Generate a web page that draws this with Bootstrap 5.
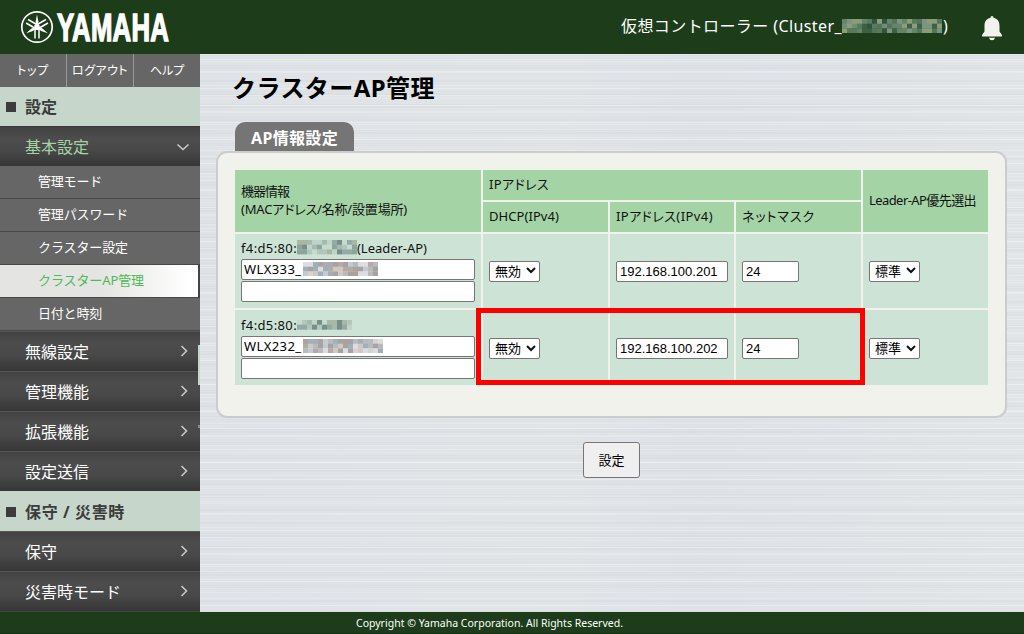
<!DOCTYPE html>
<html lang="ja">
<head>
<meta charset="utf-8">
<title>クラスターAP管理</title>
<link href="https://cdn.jsdelivr.net/npm/bootstrap@5.3.0/dist/css/bootstrap.min.css" rel="stylesheet">
<style>
body{font-family:"Noto Sans","Noto Sans CJK JP",sans-serif;font-size:13px;line-height:18px;color:#111;height:634px;overflow:hidden}
.quick,.ap{font-feature-settings:"palt"}
.topbar{height:54px;background:#1d3c1a;color:#fff}
.side{width:200px;background:#444}
.main-area{background:
 repeating-linear-gradient(180deg,rgba(255,255,255,.3) 0 1px,transparent 1px 7px,rgba(255,255,255,.2) 7px 8px,transparent 8px 17px),
 repeating-linear-gradient(180deg,rgba(190,195,200,.13) 0 2px,transparent 2px 5px,rgba(255,255,255,.2) 5px 6px,transparent 6px 11px,rgba(190,195,200,.13) 11px 12px,transparent 12px 13px),
 linear-gradient(90deg,#dfe3e7,#e1e4e7 45%,#dee1e6 60%,#e2e5e7)}
.quick{height:33px;background:#666;color:#fff;font-size:12px}
.quick a{width:67px;color:#fff}
.quick a:first-child{width:66px}
.quick a+a{border-left:1px solid #999}
.sect{height:40px;background:#c7d6cb;color:#3c3c3c;font-size:16px;font-weight:700;padding-left:6px}
.sect i{width:10px;height:10px;background:#3c3c3c;margin-right:9px}
.menu-item{height:40px;padding:0 12px 0 25px;color:#fff;font-size:16px;border-top:1px solid #565656;background:linear-gradient(#424242,#4d4d4d 30%,#484848 60%,#363636)}
.open-item{color:#a3d4a5;height:40px;border-top-color:#383838;padding-right:11px}
.sub a{height:33px;padding:0 0 2px 38px;background:#666;color:#fff;border-bottom:1px solid #484848}
.sub a.on{color:#4fb955;background:linear-gradient(90deg,#e4e4e2 50%,#fff 95%);border-right:2px solid #444}
.foot{height:22px;background:#1d3c1a;color:#fff;font-size:10.5px;border-bottom:1px solid #152b14}
h1{font-size:24px;line-height:30px;font-weight:700;color:#000}
.tab-title{width:119px;height:29px;background:#757575;color:#fff;font-size:16px;font-weight:700;border-radius:10px 10px 0 0;margin-left:19px}
.panel{width:791px;height:267px;background:#f1f2eb;border:2px solid #cbccce;border-radius:11px;padding:15px 0 0 15px}
.ap{width:757px;table-layout:fixed;border-collapse:separate;border-spacing:2px}
.ap th,.ap td{padding:0 6px;font-weight:400;vertical-align:middle}
.ap th{background:#a4d4a6;height:30px;padding-bottom:2px}
.ap td{background:#cde3d6;height:74px}
.ap td:first-child{padding-bottom:2px}
.ap tr.last-row td{height:75px;padding-top:2px}
.ap tr.last-row td:first-child{padding:0 6px}
.field,.pick{display:block;height:21px;border:1px solid #767676;border-radius:2px;background:#fff;color:#000;padding:0 3px;outline:0}
.field{width:234px;line-height:17px}
.field.named{padding-left:2px;padding-bottom:1px;letter-spacing:.4px}
.num{font:13px "Liberation Sans",sans-serif}
.pick{width:51px;padding:0 3px 1px 5px;font-family:"Noto Sans CJK JP",sans-serif}
.send{width:57px;height:36px;border:1px solid #767676;border-radius:3px;background:#efefef;color:#000;padding:0}
.w112{width:112px}.w57{width:57px}
.t{display:inline-block;white-space:nowrap}
.over{left:62px;top:3px}
.focus-box{left:476px;top:308px;width:389px;height:77px;border:5px solid #f00;pointer-events:none}
.scroll-mark{left:198px;top:345px;width:2px;height:40px;background:#c7d6cb}
.scroll-end{left:198px;top:425px;width:2px;height:3px;background:#8a8a8f}
svg{display:block;flex:none}
a{text-decoration:none}
</style>
</head>
<body class="d-flex flex-column position-relative">
<header class="topbar d-flex align-items-center flex-shrink-0">
  <svg width="260" height="54" viewBox="0 0 260 54" fill="none" stroke="#fff">
    <defs><g id="fork"><path d="M0-12.500L1.400-5.500 1-1V3H-1V-1L-1.400-5.500Z" fill="#fff" stroke="none"/><path d="M-2 11.500V3Q-2 1 0 1T2 3V11.500" stroke-width="1.500"/></g></defs>
    <circle cx="37" cy="27" r="15.200" stroke-width="1.700"/>
    <g transform="translate(37 27)"><use href="#fork"/><use href="#fork" transform="rotate(120)"/><use href="#fork" transform="rotate(240)"/></g>
    <text transform="translate(57 41) scale(.652 1)" fill="#fff" stroke-width="1.500" font-family="Liberation Sans, sans-serif" font-weight="700" font-size="39.500" font-kerning="none" letter-spacing=".4">YAMAHA</text>
  </svg>
  <div class="d-flex align-items-center fs-6" style="margin-left:361px;padding-bottom:2px"><span class="t" data-w="221">仮想コントローラー (Cluster_</span><svg class="mosaic" data-cols="20" data-rows="3" data-tone="dark"></svg><span class="t" data-w="6" style="margin-left:1px">)</span></div>
  <svg width="22" height="26" viewBox="0 0 22 26" fill="#f1f2eb" style="margin:4px 0 0 32px"><path d="M11 0q1.500 0 1.500 1.800C17 2.800 18.500 6 18.500 10V15.500L21 19V20.500H1V19L3.500 15.500V10C3.500 6 5 2.800 9.500 1.800Q9.500 0 11 0ZM8 21.800h6q-.5 2.500-3 2.500T8 21.800"/></svg>
</header>
<div class="d-flex" style="height:558px">
  <nav class="side flex-shrink-0">
    <div class="quick d-flex">
      <a href="#" class="d-flex align-items-center justify-content-center"><span class="t" data-w="32">トップ</span></a>
      <a href="#" class="d-flex align-items-center justify-content-center"><span class="t" data-w="56">ログアウト</span></a>
      <a href="#" class="d-flex align-items-center justify-content-center"><span class="t" data-w="34">ヘルプ</span></a>
    </div>
    <div class="sect d-flex align-items-center" style="height:39px"><i></i><span class="t" data-w="32">設定</span></div>
    <a class="menu-item open-item d-flex align-items-center justify-content-between" href="#"><span class="t" data-w="64">基本設定</span><svg width="12" height="8" fill="none" stroke="#ccc" stroke-width="1.500"><path d="M.5 1.500L6 6.500 11.500 1.500"/></svg></a>
    <div class="sub">
      <a href="#" class="d-flex align-items-center"><span class="t" data-w="64">管理モード</span></a>
      <a href="#" class="d-flex align-items-center"><span class="t" data-w="90">管理パスワード</span></a>
      <a href="#" class="d-flex align-items-center"><span class="t" data-w="90">クラスター設定</span></a>
      <a href="#" class="on d-flex align-items-center"><span class="t" data-w="106">クラスターAP管理</span></a>
      <a href="#" class="d-flex align-items-center"><span class="t" data-w="64">日付と時刻</span></a>
    </div>
    <a class="menu-item arrow d-flex align-items-center justify-content-between" href="#"><span class="t" data-w="64">無線設定</span></a>
    <a class="menu-item arrow d-flex align-items-center justify-content-between" href="#"><span class="t" data-w="64">管理機能</span></a>
    <a class="menu-item arrow d-flex align-items-center justify-content-between" href="#"><span class="t" data-w="64">拡張機能</span></a>
    <a class="menu-item arrow d-flex align-items-center justify-content-between" href="#"><span class="t" data-w="64">設定送信</span></a>
    <div class="sect d-flex align-items-center" style="padding-top:1px"><i></i><span class="t" data-w="100">保守 / 災害時</span></div>
    <a class="menu-item arrow d-flex align-items-center justify-content-between" href="#"><span class="t" data-w="32">保守</span></a>
    <a class="menu-item arrow d-flex align-items-center justify-content-between" href="#"><span class="t" data-w="96">災害時モード</span></a>
  </nav>
  <main class="main-area flex-grow-1" style="padding:19px 0 0 16px">
    <h1 class="mb-0" style="padding-left:16px"><span class="t" data-w="203">クラスターAP管理</span></h1>
    <div class="tab-title d-flex align-items-center justify-content-center" style="margin-top:19px;padding-top:3px"><span class="t" data-w="87">AP情報設定</span></div>
    <section class="panel">
      <table class="ap">
        <colgroup><col style="width:246px"><col style="width:125px"><col style="width:124px"><col style="width:125px"><col style="width:125px"></colgroup>
        <thead>
          <tr><th rowspan="2"><span class="t" data-w="48">機器情報</span><br><span class="t" data-w="166">(MACアドレス/名称/設置場所)</span></th><th colspan="3"><span class="t" data-w="60">IPアドレス</span></th><th rowspan="2"><span class="t" data-w="107">Leader-AP優先選出</span></th></tr>
          <tr><th><span class="t" data-w="70">DHCP(IPv4)</span></th><th><span class="t" data-w="97">IPアドレス(IPv4)</span></th><th><span class="t" data-w="73">ネットマスク</span></th></tr>
        </thead>
        <tbody>
          <tr>
            <td><div class="d-flex align-items-center" style="margin-bottom:2px"><span class="t" data-w="56">f4:d5:80:</span><svg class="mosaic" data-cols="12" data-rows="3" data-tone="green"></svg><span class="t" data-w="70">(Leader-AP)</span></div>
              <div class="position-relative" style="margin-bottom:1px"><input class="field named" value="WLX333_"><svg class="mosaic over position-absolute" data-cols="15" data-rows="3" data-tone="light"></svg></div><input class="field"></td>
            <td><div class="pick d-flex align-items-center justify-content-between">無効<svg width="10" height="7" fill="none" stroke="#111" stroke-width="2"><path d="M1 1L5 5 9 1"/></svg></div></td>
            <td><input class="field num w112" value="192.168.100.201"></td><td><input class="field num w57" value="24"></td>
            <td><div class="pick d-flex align-items-center justify-content-between">標準<svg width="10" height="7" fill="none" stroke="#111" stroke-width="2"><path d="M1 1L5 5 9 1"/></svg></div></td>
          </tr>
          <tr class="last-row">
            <td><div class="d-flex align-items-center" style="margin-bottom:2px"><span class="t" data-w="56">f4:d5:80:</span><svg class="mosaic" data-cols="11" data-rows="2" data-tone="green"></svg></div>
              <div class="position-relative" style="margin-bottom:1px"><input class="field named" value="WLX232_"><svg class="mosaic over position-absolute" data-cols="16" data-rows="3" data-tone="light"></svg></div><input class="field"></td>
            <td><div class="pick d-flex align-items-center justify-content-between">無効<svg width="10" height="7" fill="none" stroke="#111" stroke-width="2"><path d="M1 1L5 5 9 1"/></svg></div></td>
            <td><input class="field num w112" value="192.168.100.202"></td><td><input class="field num w57" value="24"></td>
            <td><div class="pick d-flex align-items-center justify-content-between">標準<svg width="10" height="7" fill="none" stroke="#111" stroke-width="2"><path d="M1 1L5 5 9 1"/></svg></div></td>
          </tr>
        </tbody>
      </table>
    </section>
    <button class="send d-block" style="margin:24px 0 0 367px">設定</button>
  </main>
</div>
<footer class="foot flex-shrink-0 d-flex align-items-center" style="padding-left:356px"><span class="t" data-w="267">Copyright © Yamaha Corporation. All Rights Reserved.</span></footer>
<div class="scroll-mark position-absolute"></div><div class="scroll-end position-absolute"></div>
<div class="focus-box position-absolute"></div>
<script src="https://cdn.jsdelivr.net/npm/bootstrap@5.3.0/dist/js/bootstrap.bundle.min.js"></script>
<script>
document.querySelectorAll('.t').forEach(e=>{
  const n=[...e.textContent].length, w=e.getBoundingClientRect().width;
  e.style.letterSpacing=((e.dataset.w-w)/n).toFixed(3)+'px';
});
document.querySelectorAll('.arrow').forEach(e=>e.insertAdjacentHTML('beforeend','<svg width="8" height="12" fill="none" stroke="#ccc" stroke-width="1.500" style="margin-bottom:2px"><path d="M1.500 1L6.500 6 1.500 11"/></svg>'));
// Masked parts of names and addresses
const tones={dark:['#5a7a5c','#6f8e77','#2f5440','#8a9c78','#54755d','#7d9580','#3d6147','#66846a'],
 green:['#a5b9ae','#8ea59b','#bfd3c8','#93aaa7','#b3c6bb','#788f89','#c6dacf','#a9b8a4'],
 light:['#b9babf','#cfc8c5','#dcdde1','#a8a2a0','#c3cbd0','#d6d2d2','#9fb0ba','#b6aaa8']};
document.querySelectorAll('.mosaic').forEach(s=>{
  const c=+s.dataset.cols,r=+s.dataset.rows,p=tones[s.dataset.tone];let k=c+3,o='';
  s.setAttribute('width',c*5);s.setAttribute('height',r*4.7);
  for(let y=0;y<r;y++)for(let x=0;x<c;x++){k=(k*73+41)%1009;o+=`<rect x="${x*5}" y="${y*4.7}" width="5" height="5" fill="${p[k%8]}"/>`}
  s.innerHTML=o;
});
</script>
</body>
</html>
